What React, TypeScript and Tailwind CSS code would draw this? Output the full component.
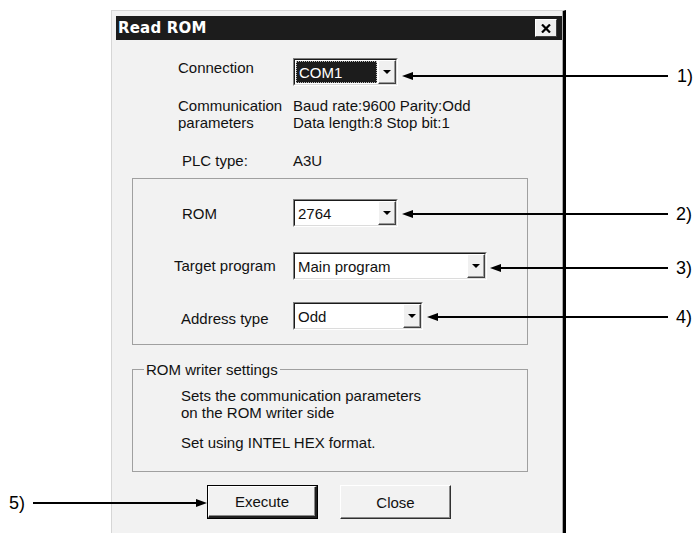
import React from "react";

function Combo({ className, value, focused }: { className: string; value: string; focused?: boolean }) {
  return (
    <div className={`flex h-[28px] border border-[#808080] border-b-white border-r-white ${className}`}>
      <div className="flex flex-1 border border-[#1a1a1a] border-b-[#dcdcdc] border-r-[#dcdcdc] bg-white">
        {focused ? (
          <div className="m-[1px] flex flex-1 items-center border border-dotted border-[#bbb] bg-[#1c1c1c] pl-[2px] text-white">
            {value}
          </div>
        ) : (
          <div className="flex flex-1 items-center pl-[3px]">{value}</div>
        )}
        <div className="flex w-[18px] items-center justify-center border border-white border-b-[#404040] border-r-[#404040] bg-[#f0f0f0] shadow-[inset_-1px_-1px_0_#9a9a9a]">
          <div className="h-0 w-0 border-x-[4px] border-t-[4px] border-x-transparent border-t-black" />
        </div>
      </div>
    </div>
  );
}

function Arrow({ tip, y, from, dir }: { tip: number; y: number; from: number; dir: "left" | "right" }) {
  const head =
    dir === "left"
      ? `${tip},${y} ${tip + 11},${y - 4} ${tip + 11},${y + 4}`
      : `${tip},${y} ${tip - 11},${y - 4} ${tip - 11},${y + 4}`;
  return (
    <g>
      <line x1={from} y1={y} x2={dir === "left" ? tip + 8 : tip - 8} y2={y} stroke="#000" strokeWidth={2} />
      <polygon points={head} fill="#000" />
    </g>
  );
}

export default function App() {
  return (
    <div className="relative h-[533px] w-[694px] overflow-hidden bg-white font-['Liberation_Sans',Arial,sans-serif] text-[15px] leading-[17px] text-[#111]">
      {/* dialog */}
      <div className="ml-[111px] mt-[10px] h-[540px] w-[455px] border-l border-t border-[#d6d6d6] border-r-[3px] border-r-black bg-[#f2f2f2] pl-[4px] pr-[1px] pt-[5px] shadow-[inset_-1px_0_0_#a8a8a8]">
        <div className="flex h-[24px] items-center justify-between bg-[#1c1c1c] pl-[2px] pr-[5px]">
          <span className="font-['DejaVu_Sans',sans-serif] text-[15px] font-bold tracking-[0.2px] text-white">Read ROM</span>
          <div className="flex h-[18px] w-[22px] items-center justify-center border border-white border-b-[#404040] border-r-[#404040] bg-[#f0f0f0]">
            <svg width="10" height="9" viewBox="0 0 10 9">
              <path d="M1 0.5 L9 8.5 M9 0.5 L1 8.5" stroke="#000" strokeWidth="2.2" />
            </svg>
          </div>
        </div>

        {/* connection */}
        <div className="mt-[18px] flex">
          <div className="ml-[62px] w-[115px] pt-[1px]">Connection</div>
          <Combo className="w-[105px]" value="COM1" focused />
        </div>

        <div className="mt-[11px] flex">
          <div className="ml-[62px] w-[115px]">
            <div>Communication</div>
            <div>parameters</div>
          </div>
          <div>
            <div>Baud rate:9600 Parity:Odd</div>
            <div>Data length:8 Stop bit:1</div>
          </div>
        </div>

        <div className="mt-[21px] flex">
          <div className="ml-[66px] w-[111px]">PLC type:</div>
          <div>A3U</div>
        </div>

        {/* target group */}
        <div className="ml-[16px] mt-[9px] h-[167px] w-[396px] border border-[#a0a0a0]">
          <div className="mt-[20px] flex">
            <div className="ml-[49px] w-[111px] pt-[6px]">ROM</div>
            <Combo className="w-[105px]" value="2764" />
          </div>
          <div className="mt-[25px] flex">
            <div className="ml-[41px] w-[119px] pt-[5px]">Target program</div>
            <Combo className="w-[194px]" value="Main program" />
          </div>
          <div className="mt-[22px] flex">
            <div className="ml-[48px] w-[112px] pt-[8px]">Address type</div>
            <Combo className="w-[130px]" value="Odd" />
          </div>
        </div>

        {/* ROM writer settings */}
        <div className="relative ml-[16px] mt-[24px] h-[103px] w-[396px] border border-[#a0a0a0] pl-[48px] pt-[17px]">
          <span className="absolute -top-[9px] left-[11px] bg-[#f2f2f2] px-[2px]">ROM writer settings</span>
          <div>Sets the communication parameters</div>
          <div>on the ROM writer side</div>
          <div className="mt-[13px]">Set using INTEL HEX format.</div>
        </div>

        <div className="ml-[91px] mt-[13px] flex gap-[22px]">
          <div className="flex h-[34px] w-[111px] border border-black">
            <div className="flex flex-1 items-center justify-center border-l border-t border-white border-b-2 border-r-2 border-b-[#202020] border-r-[#202020] bg-[#f2f2f2] shadow-[inset_-1px_-1px_0_#8a8a8a]">
              Execute
            </div>
          </div>
          <div className="flex h-[34px] w-[111px] items-center justify-center border border-white border-b-[#303030] border-r-[#303030] bg-[#f2f2f2] shadow-[inset_-1px_-1px_0_#8a8a8a]">
            Close
          </div>
        </div>
      </div>

      {/* annotation arrows */}
      <svg className="absolute left-0 top-0" width="694" height="533">
        <Arrow tip={402} y={76} from={668} dir="left" />
        <Arrow tip={402} y={214} from={668} dir="left" />
        <Arrow tip={490} y={268} from={668} dir="left" />
        <Arrow tip={427} y={317} from={668} dir="left" />
        <Arrow tip={207} y={503} from={33} dir="right" />
      </svg>
      <span className="absolute left-[677px] top-[66px] text-[18px] leading-[20px] text-black">1)</span>
      <span className="absolute left-[676px] top-[204px] text-[18px] leading-[20px] text-black">2)</span>
      <span className="absolute left-[676px] top-[258px] text-[18px] leading-[20px] text-black">3)</span>
      <span className="absolute left-[676px] top-[307px] text-[18px] leading-[20px] text-black">4)</span>
      <span className="absolute left-[9px] top-[493px] text-[18px] leading-[20px] text-black">5)</span>
    </div>
  );
}
